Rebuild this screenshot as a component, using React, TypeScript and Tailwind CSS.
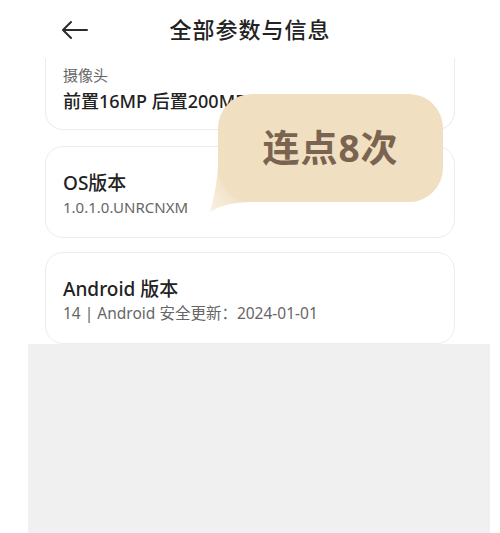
const font = { fontFamily: '"Noto Sans", "Noto Sans CJK SC", sans-serif' }

function BackArrow() {
  return (
    <svg width="28" height="20" viewBox="0 0 28 20" fill="none">
      <path d="M26 10H3M10 2L2 10l8 8" stroke="#2b2b2b" strokeWidth="2" strokeLinecap="round" strokeLinejoin="round" />
    </svg>
  )
}

function Bubble() {
  return (
    <div className="absolute left-[205px] top-[94px] h-[122px] w-[240px]">
      <svg className="absolute left-0 top-0" width="240" height="122" viewBox="0 0 240 122">
        <defs>
          <linearGradient id="tail" x1="1" y1="0" x2="0" y2="1">
            <stop offset="0.5" stopColor="#f0dfc1" />
            <stop offset="1" stopColor="#faf2e6" />
          </linearGradient>
        </defs>
        <path d="M14 60 C 13 85, 9 104, 5 118 C 18 110, 32 108, 50 108 L50 60 Z" fill="url(#tail)" />
      </svg>
      <div className="absolute left-[13px] top-0 flex h-[108px] w-[225px] items-center justify-center rounded-[34px] bg-[#f0dfc1]">
        <span className="text-[37px] font-bold tracking-[1px] text-[#7a6451]" style={font}>连点8次</span>
      </div>
    </div>
  )
}

export default function App() {
  return (
    <div className="relative flex h-[533px] w-[500px] flex-col overflow-hidden bg-white" style={font}>
      <div className="grid h-[58px] grid-cols-[1fr_auto_1fr] items-center">
        <div className="pl-[61px] pt-[1px]">
          <BackArrow />
        </div>
        <h1 className="text-[22px] font-medium tracking-[1px] text-[#222]">全部参数与信息</h1>
        <div />
      </div>

      <div className="flex flex-col px-[45px]">
        <div className="flex h-[72px] flex-col rounded-b-[18px] border-x border-b border-[#ececec] px-[17px] pt-[6px]">
          <span className="text-[15px] leading-[22px] text-[#666]">摄像头</span>
          <span className="mt-[2px] whitespace-nowrap text-[18px] font-medium leading-[26px] text-[#222]">前置16MP 后置200MP+50MP+50MP</span>
        </div>

        <div className="mt-[16px] flex h-[92px] flex-col justify-center rounded-[18px] border border-[#ececec] px-[17px] pt-[4px]">
          <span className="text-[19px] font-medium leading-[26px] text-[#222]">OS版本</span>
          <span className="text-[15px] leading-[22px] text-[#666]">1.0.1.0.UNRCNXM</span>
        </div>

        <div className="mt-[14px] flex h-[92px] flex-col justify-center rounded-[18px] border border-[#ececec] px-[17px] pt-[4px]">
          <span className="text-[19px] font-medium leading-[26px] text-[#222]">Android 版本</span>
          <span className="text-[15.5px] leading-[22px] text-[#666]">14 | Android 安全更新：2024-01-01</span>
        </div>
      </div>

      <div className="ml-[28px] mr-[10px] flex-1 bg-[#f0f0f0]" />

      <Bubble />
    </div>
  )
}
